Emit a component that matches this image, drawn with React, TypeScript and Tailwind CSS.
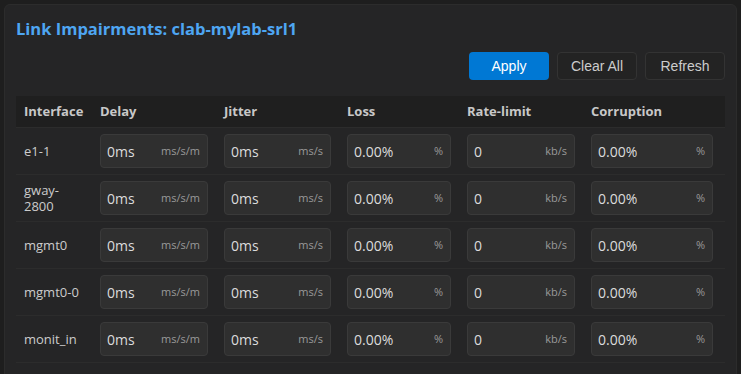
import React, { useState } from "react";

interface Row {
  name: string;
  delay: string;
  jitter: string;
  loss: string;
  rate: string;
  corruption: string;
}

const initialRows: Row[] = ["e1-1", "gway-2800", "mgmt0", "mgmt0-0", "monit_in"].map(name => ({
  name,
  delay: "0ms",
  jitter: "0ms",
  loss: "0.00%",
  rate: "0",
  corruption: "0.00%",
}));

const Field: React.FC<{ value: string; unit: string; onChange: (v: string) => void }> = ({ value, unit, onChange }) => (
  <div className="flex items-center h-[34px] rounded-[4px] border border-[#3a3a3a] bg-[#2f2f2f] pl-[6px] pr-[7px]">
    <input
      className="flex-1 min-w-0 bg-transparent text-[14px] text-[#dcdcdc] outline-none"
      value={value}
      onChange={e => onChange(e.target.value)}
    />
    <span className="text-[11px] text-[#9a9a9a] ml-1">{unit}</span>
  </div>
);

const App: React.FC = () => {
  const [rows, setRows] = useState<Row[]>(initialRows);

  const update = (idx: number, key: keyof Row, v: string) =>
    setRows(prev => prev.map((r, i) => (i === idx ? { ...r, [key]: v } : r)));

  const cols = "grid grid-cols-[76px_124px_123px_120px_124px_142px]";

  return (
    <div className="min-h-screen bg-[#1e1e1e] p-[4px] font-['Open_Sans',sans-serif]">
      <div className="h-[380px] rounded-[6px] border border-[#2c2c2c] bg-[#252526] px-[11px] pt-[11px]">
        <h2 className="text-[16.5px] font-bold leading-[26px] text-[#4ea6f2]">Link Impairments: clab-mylab-srl1</h2>
        <div className="flex justify-end gap-2 mt-[10px] font-['Liberation_Sans',sans-serif] text-[14px]">
          <button className="w-[80px] h-[28px] rounded-[4px] bg-[#0078d4] text-white">Apply</button>
          <button className="w-[80px] h-[28px] rounded-[4px] border border-[#333] bg-[#232323] text-[#cccccc]">Clear All</button>
          <button className="w-[80px] h-[28px] rounded-[4px] border border-[#333] bg-[#232323] text-[#cccccc]">Refresh</button>
        </div>
        <div className="mt-[16px]">
          <div className={`${cols} h-[32px] items-center bg-[#1f1f1f] border-b border-[#2c2c2c] text-[13px] font-bold text-[#c8c8c8]`}>
            <div className="pl-2">Interface</div>
            <div className="pl-2">Delay</div>
            <div className="pl-2">Jitter</div>
            <div className="pl-2">Loss</div>
            <div className="pl-2">Rate-limit</div>
            <div className="pl-2">Corruption</div>
          </div>
          {rows.map((r, i) => (
            <div key={r.name} className={`${cols} h-[47px] items-center border-b border-[#2c2c2c] text-[13px] text-[#cccccc]`}>
              <div className="pl-2 pr-1 leading-[16px] break-words">{r.name}</div>
              <div className="pl-2 pr-2"><Field value={r.delay} unit="ms/s/m" onChange={v => update(i, "delay", v)} /></div>
              <div className="pl-2 pr-2"><Field value={r.jitter} unit="ms/s" onChange={v => update(i, "jitter", v)} /></div>
              <div className="pl-2 pr-2"><Field value={r.loss} unit="%" onChange={v => update(i, "loss", v)} /></div>
              <div className="pl-2 pr-2"><Field value={r.rate} unit="kb/s" onChange={v => update(i, "rate", v)} /></div>
              <div className="pl-2 pr-3"><Field value={r.corruption} unit="%" onChange={v => update(i, "corruption", v)} /></div>
            </div>
          ))}
        </div>
      </div>
    </div>
  );
};

export default App;
